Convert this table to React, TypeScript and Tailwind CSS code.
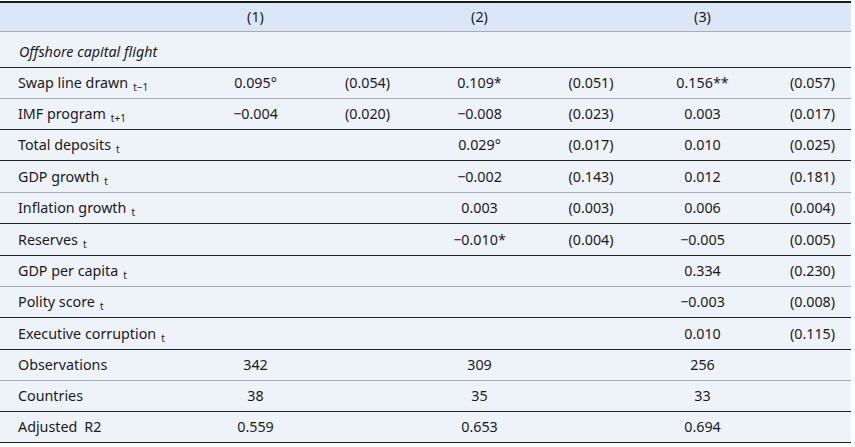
import * as React from "react";

type Row = {
  label: React.ReactNode;
  cells: string[];
  h: string;
  line: "thin" | "thick";
  italic?: boolean;
};

function Sub({ children }: { children: React.ReactNode }) {
  return <span className="ml-[5px] relative top-[3px] text-[10px] leading-none">{children}</span>;
}

const rows: Row[] = [
  { label: "Offshore capital flight", cells: ["", "", "", "", "", ""], h: "h-[36px] pt-[5px]", line: "thick", italic: true },
  { label: <>Swap line drawn<Sub>t−1</Sub></>, cells: ["0.095°", "(0.054)", "0.109*", "(0.051)", "0.156**", "(0.057)"], h: "h-[31px]", line: "thin" },
  { label: <>IMF program<Sub>t+1</Sub></>, cells: ["−0.004", "(0.020)", "−0.008", "(0.023)", "0.003", "(0.017)"], h: "h-[31px]", line: "thick" },
  { label: <>Total deposits<Sub>t</Sub></>, cells: ["", "", "0.029°", "(0.017)", "0.010", "(0.025)"], h: "h-[31px]", line: "thick" },
  { label: <>GDP growth<Sub>t</Sub></>, cells: ["", "", "−0.002", "(0.143)", "0.012", "(0.181)"], h: "h-[32px]", line: "thin" },
  { label: <>Inflation growth<Sub>t</Sub></>, cells: ["", "", "0.003", "(0.003)", "0.006", "(0.004)"], h: "h-[31px]", line: "thick" },
  { label: <>Reserves<Sub>t</Sub></>, cells: ["", "", "−0.010*", "(0.004)", "−0.005", "(0.005)"], h: "h-[32px]", line: "thick" },
  { label: <>GDP per capita<Sub>t</Sub></>, cells: ["", "", "", "", "0.334", "(0.230)"], h: "h-[31px]", line: "thin" },
  { label: <>Polity score<Sub>t</Sub></>, cells: ["", "", "", "", "−0.003", "(0.008)"], h: "h-[31px]", line: "thick" },
  { label: <>Executive corruption<Sub>t</Sub></>, cells: ["", "", "", "", "0.010", "(0.115)"], h: "h-[32px]", line: "thick" },
  { label: "Observations", cells: ["342", "", "309", "", "256", ""], h: "h-[31px]", line: "thin" },
  { label: "Countries", cells: ["38", "", "35", "", "33", ""], h: "h-[31px]", line: "thick" },
  { label: <>Adjusted<span className="ml-[7px]">R2</span></>, cells: ["0.559", "", "0.653", "", "0.694", ""], h: "h-[31px]", line: "thick" },
];

const grid = "grid grid-cols-[200px_111px_113px_111px_112px_111px_1fr]";

export default function App() {
  return (
    <div className="w-[855px] h-[447px] bg-white text-[14.3px] leading-[20px] text-[#1a1a1a]" style={{ fontFamily: '"Noto Sans", "Open Sans", sans-serif' }}>
      <div className="w-[851px] pt-[1px]">
        <div className={`${grid} h-[31px] items-center bg-[#dbe7f7] border-t-2 border-t-[#1a1a1a] border-b border-b-[#a9aeb5]`}>
          <div />
          <div className="text-center">(1)</div>
          <div />
          <div className="text-center">(2)</div>
          <div />
          <div className="text-center">(3)</div>
          <div />
        </div>
        {rows.map((r, i) => (
          <div
            key={i}
            className={`${grid} ${r.h} items-center bg-[#eef3fa] ${
              r.line === "thick" ? "border-b-[1.5px] border-b-[#222]" : "border-b border-b-[#a9aeb5]"
            }`}
          >
            <div className={`whitespace-nowrap ${r.italic ? "italic pl-[19px]" : "pl-[18px]"}`}>{r.label}</div>
            {r.cells.map((c, j) => (
              <div key={j} className={`text-center whitespace-nowrap ${j === 5 ? "pl-[16px]" : ""}`}>
                {c}
              </div>
            ))}
          </div>
        ))}
      </div>
    </div>
  );
}
